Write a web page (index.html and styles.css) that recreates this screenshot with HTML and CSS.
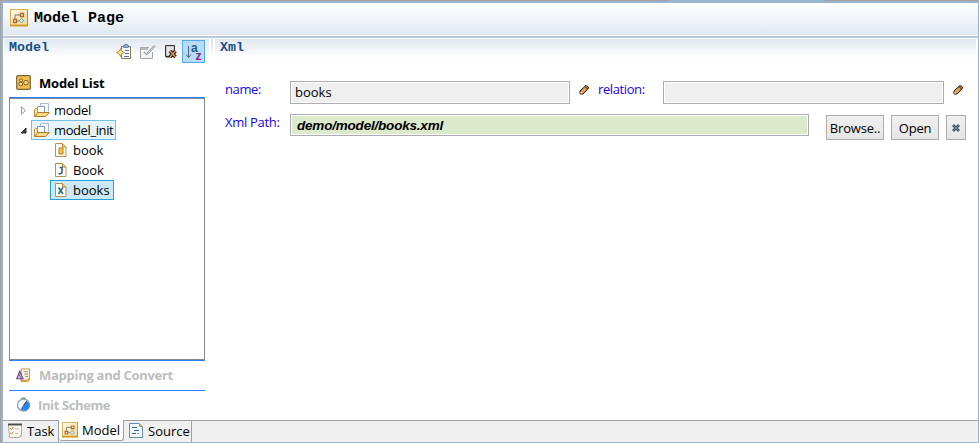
FILE: index.html
```
<!DOCTYPE html>
<html lang="en">
<head>
<meta charset="utf-8">
<title>Model Page</title>
<link rel="stylesheet" href="styles.css">
</head>
<body>
<svg class="defs" width="0" height="0">
  <defs>
    <linearGradient id="gold" x2="1" y2="1"><stop stop-color="#fffbe8"/><stop offset="1" stop-color="#f3d98c"/></linearGradient>
    <symbol id="page" viewBox="0 0 18 18">
      <rect x=".5" y=".5" width="17" height="16" fill="url(#gold)" stroke="#dcae50"/>
      <path d="M17.500 1v15" stroke="#a48d70"/><path d="M0 16.500h18" stroke="#d29b20" stroke-width="2"/>
      <path d="M5 10V6h5M7 12h2" fill="none" stroke="#70757a"/>
      <path d="M10.500 4.500h3v3h-3zM3.500 10.500h3v3h-3z" fill="#fff3d4" stroke="#b46620" stroke-width="1.300"/>
      <path d="M11.500 9.500l2.200 2.200-2.200 2.200-2.200-2.200z" fill="#d9f0f5" stroke="#559fbd"/>
    </symbol>
    <symbol id="folder" viewBox="0 0 16 15">
      <path d="M6.500 9V.5h8v8" fill="#f5f9fd" stroke="#a9bdd2"/>
      <path d="M3.500 11V3.500h7V11" fill="#fff" stroke="#8499b6"/>
      <path d="M.5 13.500V6.500l1-1h2V10" fill="#f8e8b1" stroke="#c48b31"/>
      <path d="M.8 13.500l3.200-4h11.200l-3.500 4z" fill="#f8dc88" stroke="#b67720"/>
    </symbol>
    <symbol id="file" viewBox="0 0 12 14">
      <path d="M.5.5h7l3.500 3.500v9.500H.5z" fill="#fffdf4" stroke="#b59250"/>
      <path d="M7.500.5V4H11" fill="#f0cf87" stroke="#c28228"/>
    </symbol>
    <symbol id="pencil" viewBox="0 0 10 10">
      <path d="M1 9V6l5.500-5.200h1.500L9.400 2v1.500L4 9z" fill="#e0a04c" stroke="#20150b"/>
      <path d="M6 1.500l2.800 2.800" stroke="#8c4c0d" stroke-width="1.500"/><path d="M1.500 6.500L3.500 8.500H1.500z" fill="#fff0cf"/>
    </symbol>
  </defs>
</svg>
<div class="window">
  <header class="title"><svg width="18" height="18"><use href="#page"/></svg><h1>Model Page</h1></header>
  <div class="rule"></div>
  <main class="content">
    <section class="side">
      <div class="side-head">
        <h2>Model</h2>
        <div class="tools">
          <span class="tool"><svg width="16" height="16" viewBox="0 0 16 16"><path d="M5.500 2.500h9v12h-9z" fill="#f5f8ff" stroke="#90784f"/><path d="M7.500 3.500V1.500h1V.5h3v1h1v2z" fill="#8ba7d5" stroke="#6c86b0"/><path d="M9 6.500h4M9 9.500h4M8 12.500h5" stroke="#5277b8"/><path d="M4.500 4.500L5.700 7.300 8.500 8.500 5.700 9.700 4.500 12.500 3.300 9.700.5 8.500l2.800-1.200z" fill="#ffefa0" stroke="#c88f2b"/></svg></span>
          <span class="tool"><svg width="16" height="16" viewBox="0 0 16 16"><path d="M9 3.500H.5v11h12V8" fill="#f3f3f3" stroke="#a5a5a5"/><path d="M1 5h7" stroke="#bbb" stroke-width="2"/><path d="M4 8l2.500 2.500L9 8" fill="none" stroke="#aaa" stroke-width="1.500"/><path d="M7.500 8.500l6.500-7 1 1L8.500 9.500z" fill="#ddd" stroke="#999"/></svg></span>
          <span class="tool"><svg width="14" height="14" viewBox="0 0 14 14"><path d="M1.500.5h9v11h-9z" fill="#c9c9c9" stroke="#333"/><path d="M3 2h6v8H3z" fill="#e5e5e5"/><path d="M2 12.500h4" stroke="#888"/><path d="M6 6l5.500 6M11.500 6L6 12" stroke="#291a13" stroke-width="3.500"/><path d="M6 6l5.500 6M11.500 6L6 12" stroke="#dfa36c" stroke-width="1.200"/></svg></span>
          <span class="tool on"><svg width="18" height="18" viewBox="0 0 18 18"><path d="M3.500 3v11M1 11.500l2.500 3L6 11.500" fill="none" stroke="#4b6179"/><text x="6" y="8.500" class="ga">a</text><text x="10.500" y="16.500" class="gz">z</text></svg></span>
        </div>
      </div>
      <div class="stack-row open"><svg width="15" height="15" viewBox="0 0 15 15"><rect x=".7" y=".7" width="13.600" height="13.600" rx="1" fill="#f4c04a" stroke="#76633e" stroke-width="1.200"/><circle cx="5" cy="5.300" r="1.500" fill="#ffdf82" stroke="#6a5023" stroke-width=".9"/><circle cx="4.800" cy="9" r="1.900" fill="#ffdf82" stroke="#6a5023" stroke-width=".9"/><circle cx="10" cy="7.700" r="2.300" fill="#ffdf82" stroke="#6a5023" stroke-width=".9"/></svg><span class="t-list">Model List</span></div>
      <div class="tree">
        <div class="node"><svg class="arrow" width="7" height="9" viewBox="0 0 7 9"><path d="M1.500.8v7.400l4-3.700z" fill="#fff" stroke="#9b9b9b"/></svg><span class="item"><svg width="16" height="15"><use href="#folder"/></svg><b class="w1">model</b></span></div>
        <div class="node"><svg class="arrow" width="7" height="9" viewBox="0 0 7 9"><path d="M6 2v5H1.200z" fill="#444" stroke="#262626"/></svg><span class="item hover"><svg width="16" height="15"><use href="#folder"/></svg><b class="w2">model_init</b></span></div>
        <div class="node leaf"><span class="item"><svg width="12" height="14"><use href="#file"/><path d="M4 5h4v6H4z" fill="#f7c852" stroke="#bd7b15"/></svg><b>book</b></span></div>
        <div class="node leaf"><span class="item"><svg width="12" height="14"><use href="#file"/><path d="M4.500 4.500H7V9q0 2-3.500 2" fill="none" stroke="#255e94" stroke-width="1.600"/></svg><b>Book</b></span></div>
        <div class="node leaf"><span class="item selected"><svg width="12" height="14"><use href="#file"/><path d="M3.500 4.500l4.500 6.500M8 4.500L3.500 11" stroke="#1c6e86" stroke-width="1.500"/></svg><b>books</b></span></div>
      </div>
      <div class="stack-row"><svg width="16" height="15" viewBox="0 0 16 15"><path d="M5.500.5h9V10l-3 3.500h-6z" fill="#fff6d5" stroke="#b39143"/><path d="M8 3.500h5M9 6h4M10 8.500h3" stroke="#6989af"/><path d="M5 12.500h6l3.500-2v2l-2 1.500H6z" fill="#eebe4e" stroke="#bc8628" stroke-width=".7"/><path d="M4 3l3.500 8H.8z" fill="#ded0ed" stroke="#704183" stroke-width="1.200"/><path d="M3 6l2.500 4.500" stroke="#704183"/></svg><span class="t-map">Mapping and Convert</span></div>
      <div class="stack-row last"><svg width="15" height="15" viewBox="0 0 15 15"><circle cx="7.500" cy="8" r="6" fill="#f5f8fc" stroke="#98a5b0" stroke-width="1.400"/><path d="M7.500 8L11 4A5.200 5.200 0 1 1 4.500 12z" fill="#2f83ec"/><path d="M5.500 1.200h4" stroke="#8a959c" stroke-width="1.600"/><path d="M7.500 8.300l3-4" stroke="#333"/></svg><span class="t-init">Init Scheme</span></div>
    </section>
    <section class="main">
      <h2>Xml</h2>
      <div class="line first">
        <label class="l-name">name:</label><div class="field name">books</div><svg class="pen" width="10" height="10"><use href="#pencil"/></svg>
        <label class="l-rel">relation:</label><div class="field rel"></div><svg class="pen" width="10" height="10"><use href="#pencil"/></svg>
      </div>
      <div class="line second">
        <label class="l-path">Xml Path:</label><div class="field path">demo/model/books.xml</div>
        <div class="buttons"><button class="browse">Browse..</button><button class="open-btn">Open</button><button class="clear" aria-label="Clear"><svg width="8" height="8" viewBox="0 0 8 8"><path d="M1 1l6 6M7 1L1 7" stroke="#4a565e" stroke-width="2.800"/><path d="M1.500 1.500l5 5M6.500 1.500l-5 5" stroke="#8b979e" stroke-width=".7"/></svg></button></div>
      </div>
    </section>
  </main>
  <nav class="tabs">
    <div class="tab task"><svg width="15" height="15" viewBox="0 0 15 15"><path d="M.5 1.500h13V12l-2 2.500H1.500z" fill="#fcf8ef" stroke="#b6a995"/><path d="M0 1.500h14" stroke="#544f4b" stroke-width="2"/><path d="M2 5l1.500 1.500L5.500 4M2 9.500L3.500 11l2-2.500" fill="none" stroke="#ce7041"/><path d="M7 6h4M7 10.500h3" stroke="#c6bcae"/><path d="M11 14l3-4v3z" fill="#cbaa77"/></svg><span>Task</span></div>
    <div class="tab model"><svg width="16" height="16"><use href="#page"/></svg><span>Model</span></div>
    <div class="tab source"><svg width="14" height="15" viewBox="0 0 14 15"><path d="M.5.500h10l3 3v11H.5z" fill="#f3faff" stroke="#668bb4"/><path d="M10.500.5v3h3" fill="#e4c88e" stroke="#b79651"/><path d="M3 4.500h5M5 7.500h5M3 10.500h4" stroke="#356796" stroke-width="1.200"/><path d="M8 10.500h2" stroke="#b78d42"/></svg><span>Source</span></div>
  </nav>
</div>
</body>
</html>
```

FILE: styles.css
```
* { box-sizing: border-box; }
body { margin: 0; overflow: hidden; font: 13px/18px "Open Sans", "Noto Sans", sans-serif; color: #000; }
.defs { position: absolute; }
svg { display: block; flex: none; overflow: visible; }
h1, h2 { margin: 0; font-family: "Liberation Mono", monospace; font-weight: bold; }
.window { width: 979px; height: 443px; display: flex; flex-direction: column; background: #fff; border: solid #99b4d1; border-width: 3px 1px 1px 3px; }
.window::before { content: ""; position: absolute; left: 0; top: 0; width: 1px; height: 443px; background: #a5a1a2; }
.window::after { content: ""; position: absolute; left: 0; top: 0; width: 979px; height: 1px; background: linear-gradient(90deg, #a5a1a2 670px, #99b4d1 670px 824px, #a5a1a2 824px); }
.title { height: 32px; display: flex; align-items: center; padding: 0 0 0 7px; background: linear-gradient(#fff, #f1f5fa 50%, #e1e8f1); }
.title svg { margin-top: -2px; }
.title h1 { font-size: 15px; line-height: 20px; margin-left: 6px; }
.rule { height: 4px; background: #b6c9df; border: solid #fff; border-width: 1px 0; }
.content { height: 381px; display: flex; }
.side { width: 208px; padding: 0 6px; border: 1px solid #fff; border-width: 0 2px 0 1px; background: linear-gradient(#e1e8f1, #fff 19px); }
.side-head { height: 29px; display: flex; justify-content: space-between; width: 196px; margin-left: -1px; }
h2 { font-size: 13.3px; line-height: 17px; color: #174f83; }
.tools { display: flex; height: 24px; margin-top: 1px; }
.tool { width: 23.500px; height: 23px; display: flex; align-items: center; justify-content: center; padding-left: 2px; }
.tool.on { width: 23px; background: #b7dcfb; border: 1px solid #55a7ef; padding: 0; }
.ga { font: bold 12px "Liberation Sans"; fill: #215b80; }
.gz { font: bold 12px "Liberation Sans"; fill: #8c2389; }
.stack-row { height: 30px; width: 196px; margin-left: -1px; padding: 0 0 1px 7px; display: flex; align-items: center; gap: 8px; border-bottom: 1px solid #2a7fff; color: #bdbdbd; font-weight: bold; white-space: nowrap; }
.stack-row svg { width: 15px; }
.stack-row.open { color: #000; padding-bottom: 0; }
.stack-row.last { border: 0; height: 29px; padding-bottom: 2px; }
.t-list { letter-spacing: -.15px; }
.t-map { letter-spacing: -.28px; }
.t-init { letter-spacing: -.38px; margin-left: -1px; }
.tree { width: 196px; margin-left: -1px; height: 263px; padding-top: 1px; border: 1px solid #858997; border-bottom: 1px solid #2a7fff; box-shadow: inset 0 -1px #858997; }
.node { height: 20px; display: flex; align-items: center; padding-left: 10px; }
.node.leaf { padding-left: 40px; }
.arrow { margin-right: 4px; }
.item { height: 20px; display: flex; align-items: center; gap: 4px; padding: 0 2px 0 2px; border: 1px solid transparent; }
.node:not(.leaf) svg { flex: none; }
.leaf .item { gap: 6px; padding: 0 3px 0 4px; }
.item.hover { background: #e5f3fb; border-color: #70c0e7; }
.item.selected { background: #cbe8f6; border-color: #26a0da; }
.item b { font-weight: normal; white-space: nowrap; }
.w1 { letter-spacing: -.25px; }
.w2 { letter-spacing: -.4px; }
.main { flex: 1; margin-left: 2px; padding-left: 5px; border-left: 2px solid #fff; border-right: 2px solid #fff; background: linear-gradient(#e1e8f1, #fff 19px); }
.content { background: linear-gradient(#d4e0ed, #fff 19px); }
.line { display: flex; }
.first { margin-top: 25px; height: 33px; }
.line label { color: #1a00f5; line-height: 17px; white-space: nowrap; margin-left: 5px; }
.l-name, .l-path { width: 65px; }
.l-name, .l-rel { letter-spacing: -.4px; }
.l-path { letter-spacing: -.3px; }
.l-rel { width: 65px; }
.field { border: 1px solid #abadb3; box-shadow: inset 0 0 0 1px #fff; background: #efefef; height: 23px; line-height: 21px; padding-left: 4px; }
.name { width: 280px; }
.rel { width: 281px; }
.pen { margin: 4px 4.500px 0 8.500px; }
.first .l-rel { margin-left: 5px; }
.path { width: 519px; height: 22px; background: #dce9cb; padding-left: 6px; font: italic bold 13.500px/21px "Liberation Sans", sans-serif; letter-spacing: -.2px; white-space: nowrap; }
.buttons { display: flex; gap: 7px; margin: 1px 0 0 17px; }
button { height: 25px; padding: 0; border: 1px solid #acacac; background: linear-gradient(#f0f0f0, #e5e5e5); color: #000; font: 13px/20px "Open Sans", sans-serif; letter-spacing: -.2px; display: flex; align-items: center; justify-content: center; }
.browse { width: 58px; }
.open-btn { width: 48px; }
.clear { width: 20px; }
.tabs { height: 22px; display: flex; background: #f0f0f0; border-top: 1px solid #a0a0a0; }
.tab { display: flex; align-items: center; gap: 4px; border-right: 1px solid #a0a0a0; height: 21px; padding: 0 0 2px 5px; white-space: nowrap; }
.task { width: 56px; }
.model { width: 65px; margin-top: -1px; padding: 0 0 0 3px; background: #fff; border-bottom: 1px solid #a0a0a0; border-radius: 0 0 3px 3px; }
.source { width: 68px; gap: 5px; }
```
